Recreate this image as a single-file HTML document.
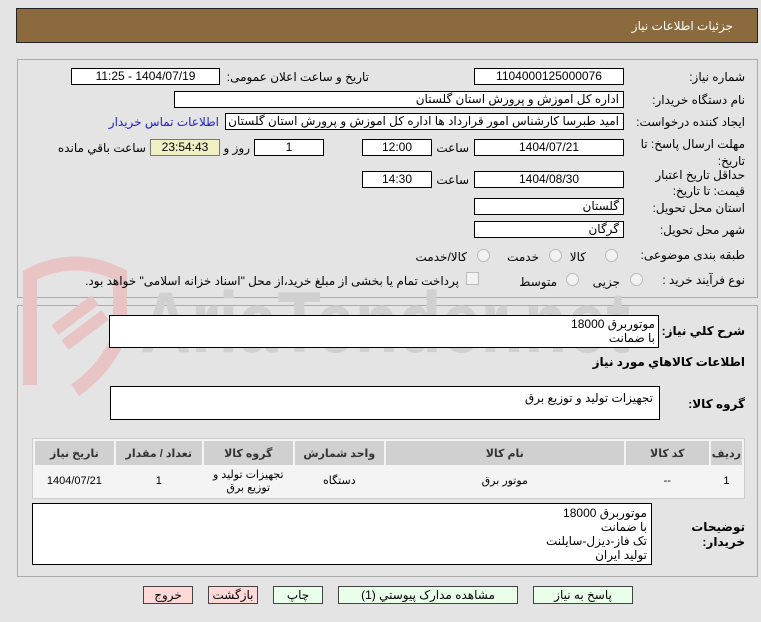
<!DOCTYPE html>
<html><head><meta charset="utf-8">
<style>
body{margin:0;width:761px;height:622px;background:#e4e4e4;font-family:"Liberation Sans","DejaVu Sans",sans-serif;font-size:12px;color:#000;position:relative;overflow:hidden}
.a{position:absolute}
.hdr{left:16px;top:8px;width:742px;height:35px;background:#8b6a3e;border:1px solid #222;box-sizing:border-box}
.hdr span{position:absolute;right:24px;top:10px;color:#fff;font-size:12px}
.pn{border:1px solid #aaa;box-sizing:border-box}
.in{position:absolute;background:#fff;border:1px solid #000;box-sizing:border-box;height:17px;line-height:15px;font-size:12px;direction:rtl;padding:0 4px;white-space:nowrap;overflow:hidden}
.c{text-align:center}
.l{position:absolute;direction:rtl;white-space:nowrap;font-size:12px}
.r{right:16px}
.b{font-weight:bold}
.rad{position:absolute;width:11px;height:11px;border:1px solid #bbb;border-radius:50%;background:#f2f2f2}
.ta{position:absolute;background:#fff;border:1px solid #000;box-sizing:border-box;direction:rtl;font-size:12px;padding:1px 3px;line-height:14px}
table{position:absolute;left:32px;top:438px;width:713px;border-collapse:separate;border-spacing:2px;background:#f4f4f4;border:1px solid #ccc;font-size:11px;direction:rtl}
th{background:#d0d0d0;height:22px;font-weight:bold;color:#333}
td{background:#f4f4f4;text-align:center;height:27px;line-height:13px}
.btn{position:absolute;top:586px;height:18px;border:1px solid #444;box-sizing:border-box;text-align:center;line-height:16px;font-size:12px}
.g{background:#eaffea}.p{background:#ffd8d8}
</style></head><body>
<div class="a hdr"><span>جزئیات اطلاعات نیاز</span></div>

<div class="a pn" style="left:17px;top:59px;width:741px;height:239px"></div>
<div class="a pn" style="left:17px;top:305px;width:741px;height:272px"></div>

<!-- watermark -->
<svg class="a" style="left:0;top:240px" width="700" height="160">
<path d="M30 145 L30 35 Q75 12 120 35 L120 95 Q105 130 75 150" fill="none" stroke="#e8c4c4" stroke-width="14"/>
<path d="M55 90 L95 60 M65 105 L105 75" stroke="#e8c4c4" stroke-width="12"/>
<text x="140" y="112" font-family="Liberation Sans,sans-serif" font-size="86" fill="#d0d0d0" font-weight="bold" textLength="490" lengthAdjust="spacingAndGlyphs">AriaTender.net</text>
</svg>

<div class="l" style="right:16px;top:70px">شماره نیاز:</div>
<div class="in c" style="left:474px;top:68px;width:150px">1104000125000076</div>
<div class="l" style="right:392px;top:70px">تاریخ و ساعت اعلان عمومی:</div>
<div class="in c" style="left:71px;top:68px;width:149px">1404/07/19 - 11:25</div>

<div class="l r" style="top:93px">نام دستگاه خریدار:</div>
<div class="in" style="left:174px;top:91px;width:450px">اداره کل اموزش و پرورش استان گلستان</div>

<div class="l r" style="top:115px">ایجاد کننده درخواست:</div>
<div class="in" style="left:225px;top:113px;width:399px">امید طبرسا کارشناس امور قرارداد ها اداره کل اموزش و پرورش استان گلستان</div>
<div class="l" style="right:542px;top:115px;color:#2020d0">اطلاعات تماس خریدار</div>

<div class="l r" style="top:136px;line-height:17px">مهلت ارسال پاسخ: تا<br>تاریخ:</div>
<div class="in c" style="left:474px;top:139px;width:150px">1404/07/21</div>
<div class="l" style="right:292px;top:141px">ساعت</div>
<div class="in c" style="left:362px;top:139px;width:70px">12:00</div>
<div class="in c" style="left:254px;top:139px;width:70px">1</div>
<div class="l" style="right:511px;top:141px">روز و</div>
<div class="in c" style="left:150px;top:139px;width:70px;background:#f0f0c4;border-color:#777">23:54:43</div>
<div class="l" style="right:615px;top:141px">ساعت باقي مانده</div>

<div class="l r" style="top:167px;line-height:16px">حداقل تاریخ اعتبار<br>قیمت: تا تاریخ:</div>
<div class="in c" style="left:474px;top:171px;width:150px">1404/08/30</div>
<div class="l" style="right:292px;top:173px">ساعت</div>
<div class="in c" style="left:362px;top:171px;width:70px">14:30</div>

<div class="l r" style="top:201px">استان محل تحویل:</div>
<div class="in" style="left:474px;top:198px;width:150px">گلستان</div>
<div class="l r" style="top:223px">شهر محل تحویل:</div>
<div class="in" style="left:474px;top:221px;width:150px">گرگان</div>

<div class="l r" style="top:248px">طبقه بندی موضوعی:</div>
<div class="rad" style="left:605px;top:249px"></div><div class="l" style="right:175px;top:250px">کالا</div>
<div class="rad" style="left:549px;top:249px"></div><div class="l" style="right:222px;top:250px">خدمت</div>
<div class="rad" style="left:477px;top:249px"></div><div class="l" style="right:294px;top:250px">کالا/خدمت</div>

<div class="l r" style="top:273px">نوع فرآیند خرید :</div>
<div class="rad" style="left:630px;top:273px"></div><div class="l" style="right:141px;top:275px">جزیی</div>
<div class="rad" style="left:566px;top:273px"></div><div class="l" style="right:204px;top:275px">متوسط</div>
<div class="a" style="left:466px;top:272px;width:11px;height:11px;border:1px solid #bbb;background:#f2f2f2"></div>
<div class="l" style="right:302px;top:274px">پرداخت تمام یا بخشی از مبلغ خرید،از محل "اسناد خزانه اسلامی" خواهد بود.</div>

<div class="l r b" style="top:324px">شرح کلي نیاز:</div>
<div class="ta" style="left:109px;top:315px;width:550px;height:33px">موتوربرق 18000<br>با ضمانت</div>
<div class="l r b" style="top:355px">اطلاعات کالاهاي مورد نیاز</div>
<div class="l r b" style="top:397px">گروه کالا:</div>
<div class="ta" style="left:110px;top:386px;width:550px;height:34px;padding:4px 6px">تجهیزات تولید و توزیع برق</div>

<table>
<tr><th style="width:28px">ردیف</th><th style="width:81px">کد کالا</th><th style="width:236px">نام کالا</th><th style="width:87px">واحد شمارش</th><th style="width:87px">گروه کالا</th><th style="width:84px">تعداد / مقدار</th><th>تاریخ نیاز</th></tr>
<tr><td>1</td><td>--</td><td>موتور برق</td><td>دستگاه</td><td>تجهیزات تولید و<br>توزیع برق</td><td>1</td><td>1404/07/21</td></tr>
</table>

<div class="l r b" style="top:520px;line-height:15px">توضیحات<br>خریدار:</div>
<div class="ta" style="left:32px;top:503px;width:620px;height:62px;line-height:14px;padding:2px 4px">موتوربرق 18000<br>با ضمانت<br>تک فاز-دیزل-سایلنت<br>تولید ایران</div>

<div class="btn p" style="left:143px;width:50px">خروج</div>
<div class="btn p" style="left:208px;width:50px">بازگشت</div>
<div class="btn g" style="left:273px;width:50px">چاپ</div>
<div class="btn g" style="left:338px;width:180px">مشاهده مدارک پیوستي (1)</div>
<div class="btn g" style="left:533px;width:100px">پاسخ به نیاز</div>
</body></html>
